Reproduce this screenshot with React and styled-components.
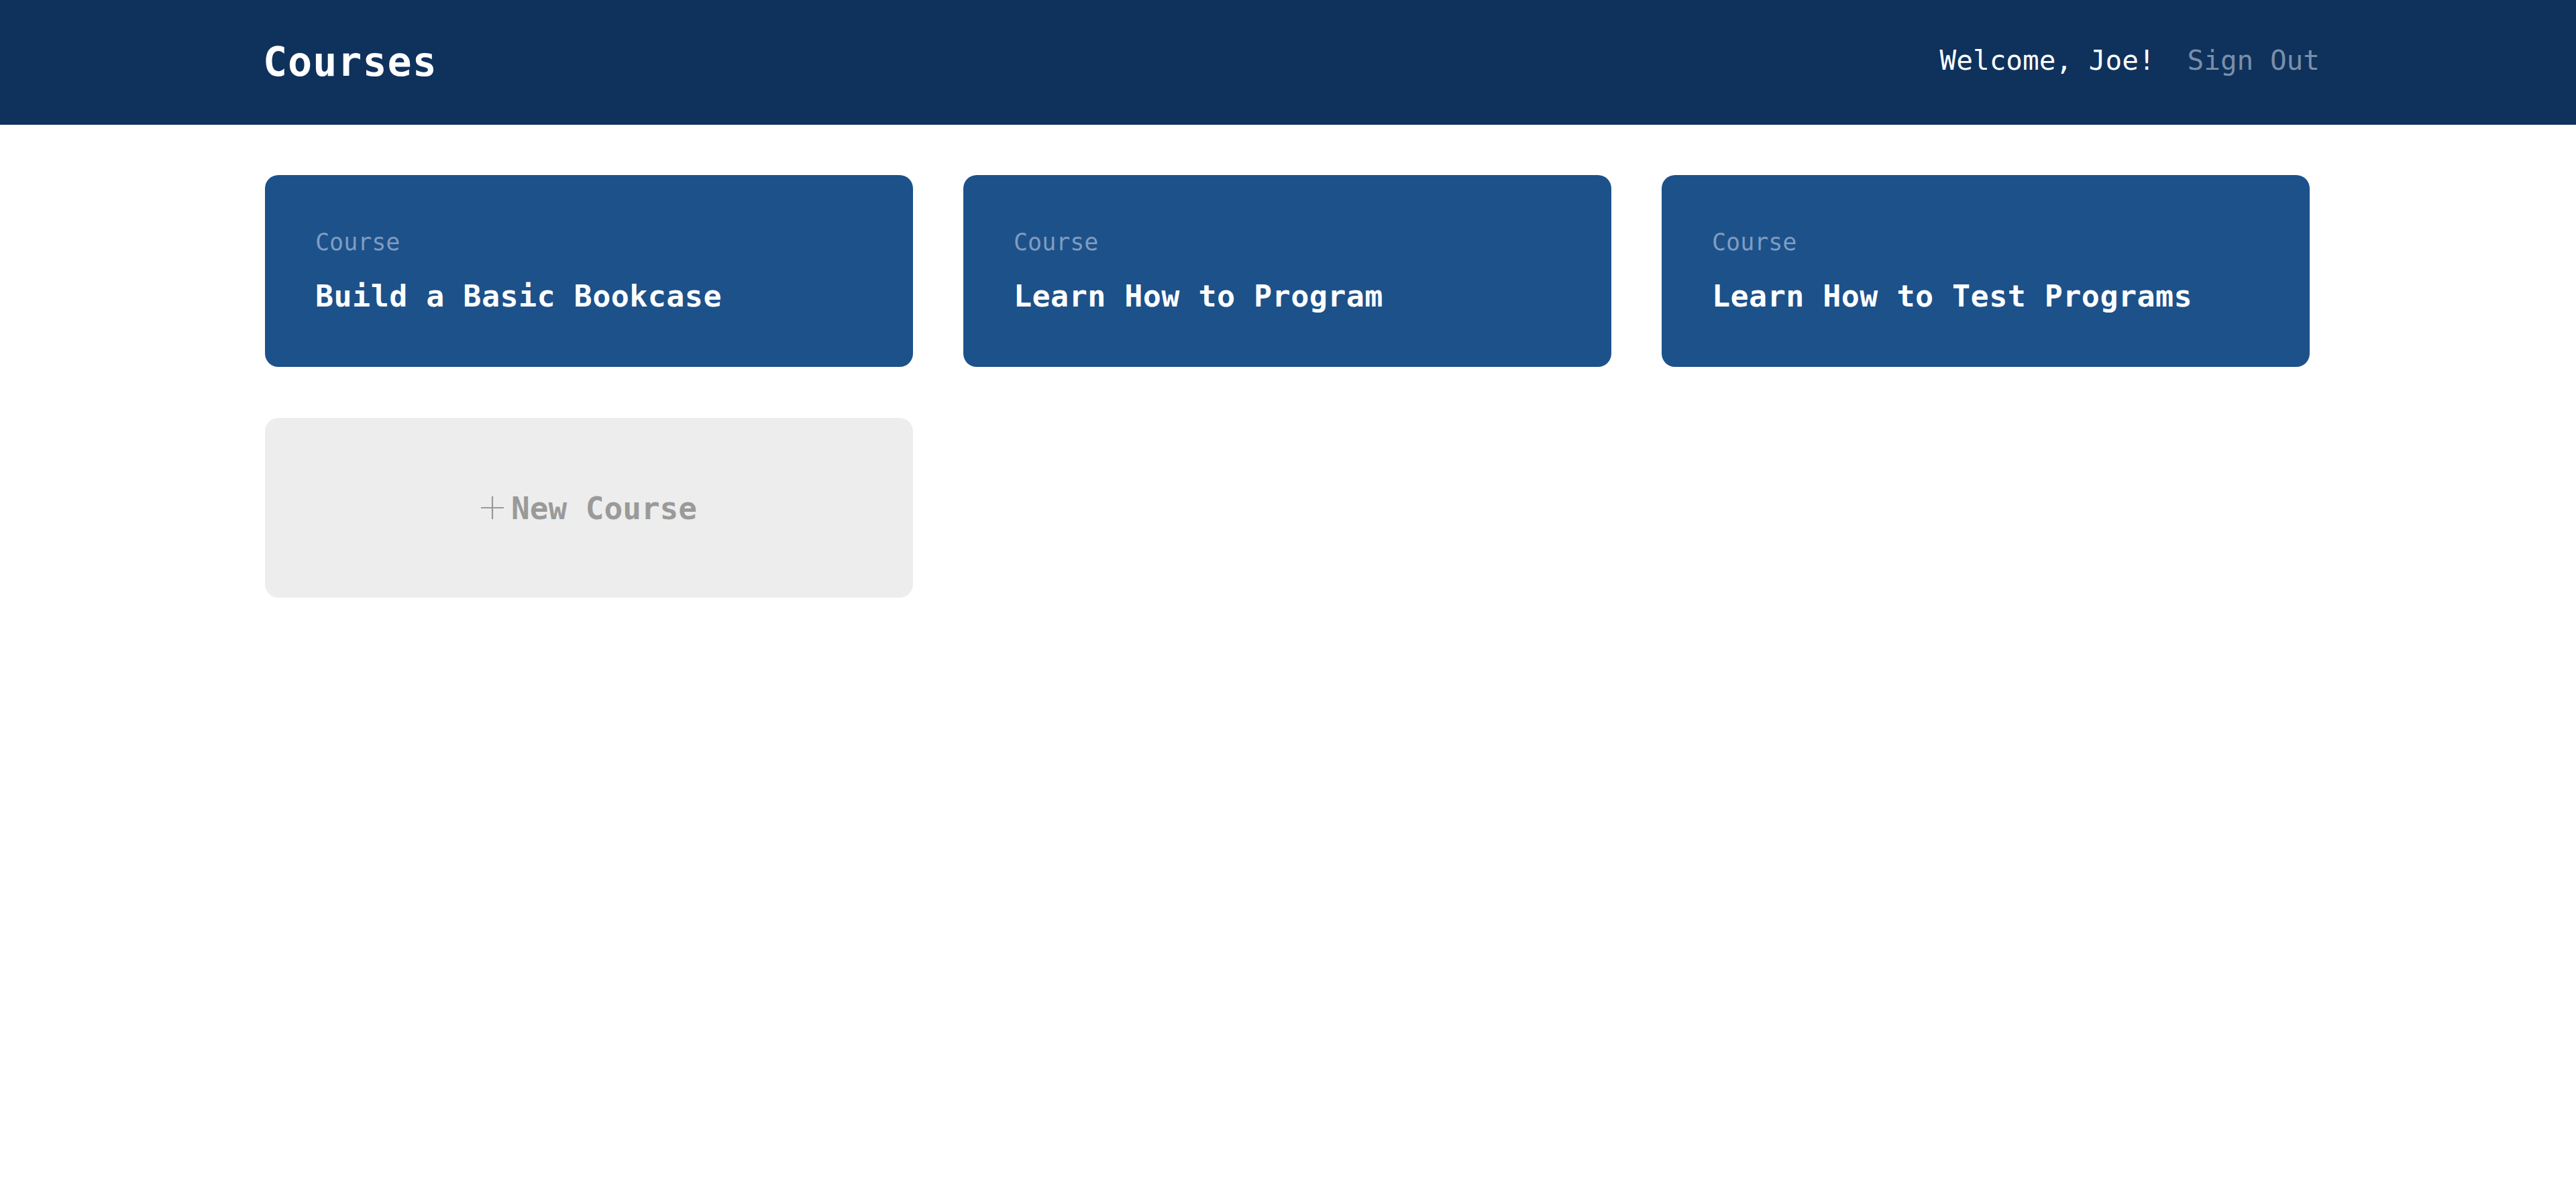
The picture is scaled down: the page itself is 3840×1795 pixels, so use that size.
import React from "react";
import styled, { createGlobalStyle } from "styled-components";

const GlobalStyle = createGlobalStyle`
  html, body {
    margin: 0;
    padding: 0;
    background: #ffffff;
    font-family: "DejaVu Sans Mono", "Liberation Mono", monospace;
  }
  * { box-sizing: border-box; }
`;

const Page = styled.div`
  min-height: 1795px;
  background: #ffffff;
`;

const Header = styled.header`
  height: 186px;
  background: #0e325c;
  display: flex;
  align-items: center;
  justify-content: space-between;
  padding: 0 382px 0 392px;
`;

const Title = styled.h1`
  margin: 0 0 2px;
  font-size: 60px;
  line-height: 1;
  font-weight: 700;
  letter-spacing: 1px;
  color: #ffffff;
`;

const Nav = styled.nav`
  display: flex;
  align-items: center;
  gap: 48px;
  margin-top: -5px;
`;

const NavText = styled.span`
  font-size: 41px;
  line-height: 1;
  color: ${(p) => (p.$muted ? "#7b8ea8" : "#ffffff")};
  cursor: ${(p) => (p.$muted ? "pointer" : "default")};
`;

const Main = styled.main`
  padding: 75px 397px 0 395px;
`;

const Grid = styled.div`
  display: grid;
  grid-template-columns: repeat(3, 1fr);
  column-gap: 75px;
  row-gap: 76px;
`;

const CourseCard = styled.a`
  display: flex;
  flex-direction: column;
  gap: 40px;
  padding: 83px 75px;
  background: #1d518a;
  border-radius: 20px;
  text-decoration: none;
`;

const Label = styled.span`
  font-size: 35px;
  line-height: 1;
  color: #7f9cc0;
`;

const CourseTitle = styled.span`
  font-size: 45px;
  line-height: 1;
  font-weight: 700;
  letter-spacing: 0.45px;
  color: #ffffff;
`;

const NewCard = styled.a`
  height: 268px;
  display: flex;
  align-items: center;
  justify-content: center;
  gap: 11px;
  background: #ededed;
  border-radius: 20px;
  text-decoration: none;
  color: #9a9a9a;
`;

const NewText = styled.span`
  font-size: 46px;
  line-height: 1;
  font-weight: 700;
  margin-top: 2px;
`;

const PlusIcon = () => (
  <svg width="34" height="34" viewBox="0 0 34 34" aria-hidden="true">
    <path d="M17 0 V34 M0 17 H34" stroke="#9a9a9a" strokeWidth="2.2" fill="none" />
  </svg>
);

const courses = [
  "Build a Basic Bookcase",
  "Learn How to Program",
  "Learn How to Test Programs",
];

export default function App() {
  return (
    <Page>
      <GlobalStyle />
      <Header>
        <Title>Courses</Title>
        <Nav>
          <NavText>Welcome, Joe!</NavText>
          <NavText $muted>Sign Out</NavText>
        </Nav>
      </Header>
      <Main>
        <Grid>
          {courses.map((c) => (
            <CourseCard key={c}>
              <Label>Course</Label>
              <CourseTitle>{c}</CourseTitle>
            </CourseCard>
          ))}
          <NewCard>
            <PlusIcon />
            <NewText>New Course</NewText>
          </NewCard>
        </Grid>
      </Main>
    </Page>
  );
}
